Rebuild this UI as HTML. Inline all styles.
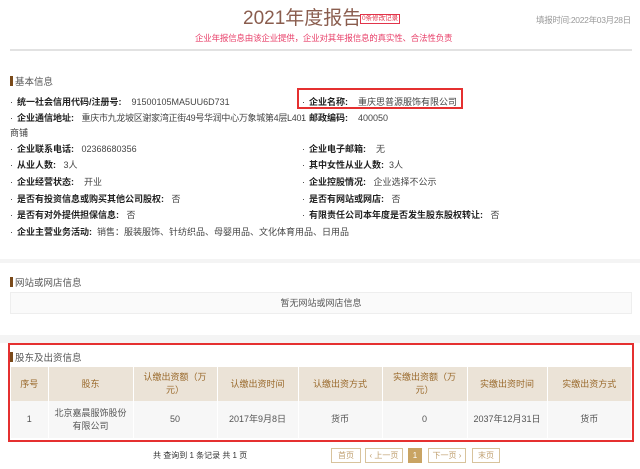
<!DOCTYPE html>
<html><head><meta charset="utf-8"><style>
*{margin:0;padding:0;box-sizing:border-box}
body{width:640px;height:469px;background:#fff;font-family:"Liberation Sans","Noto Sans CJK SC",sans-serif;position:relative;overflow:hidden;color:#333;font-size:9px}
.a{position:absolute;white-space:nowrap}
.t{left:243px;top:8px;font-size:19px;color:#8a5d4e;line-height:22px}
.badge{left:360px;top:14px;font-size:6.5px;color:#e2344a;border:1px solid #e2344a;padding:0 1px;line-height:8px}
.sub{left:195px;top:32px;font-size:8.5px;color:#e8406a;letter-spacing:-0.2px}
.time{left:536px;top:14px;font-size:8.5px;color:#999;letter-spacing:-0.3px}
.line{left:10px;top:49px;width:622px;height:2px;background:#e2e2e2}
.h{font-size:9.5px;color:#555}
.h:before{content:"";display:inline-block;width:3px;height:10px;background:#7a4a1a;margin-right:2px;vertical-align:-1px}
.b{font-weight:bold;color:#222}
.b:before{content:"·";font-weight:normal;margin-right:4px;color:#333}
.v{color:#444}
.gray{left:0;width:640px;background:#f4f4f4}
table{border-collapse:collapse;position:absolute;left:11px;top:367px;width:621px;font-size:9px;text-align:center}
th{background:#ebe3d7;color:#9a6a2c;font-weight:normal;height:34px;border-right:1px solid #fff;line-height:13px}
td{background:#f7f7f7;height:37px;border-right:1px solid #fff;color:#555;line-height:13px}
.pg{top:448px;height:15px;border:1px solid #d8c39c;color:#c0a070;font-size:8px;text-align:center;line-height:13px;background:#fff}
</style></head><body>
<div class="a t">2021年度报告</div>
<div class="a badge">0条修改记录</div>
<div class="a sub">企业年报信息由该企业提供，企业对其年报信息的真实性、合法性负责</div>
<div class="a time">填报时间:2022年03月28日</div>
<div class="a line"></div>
<div class="a h" style="left:10px;top:74px">基本信息</div>

<div class="a" style="left:10px;top:95px"><span class="b">统一社会信用代码/注册号:</span>&nbsp;&nbsp;&nbsp;&nbsp;<span class="v">91500105MA5UU6D731</span></div>
<div class="a" style="left:302px;top:95px"><span class="b">企业名称:</span>&nbsp;&nbsp;&nbsp;&nbsp;<span class="v">重庆思普源服饰有限公司</span></div>
<div class="a" style="left:297px;top:88px;width:166px;height:21px;border:2px solid #e53030"></div>
<div class="a" style="left:10px;top:111px"><span class="b">企业通信地址:</span>&nbsp;&nbsp;&nbsp;<span class="v" style="letter-spacing:-0.3px">重庆市九龙坡区谢家湾正街49号华润中心万象城第4层L401</span></div>
<div class="a" style="left:302px;top:111px"><span class="b">邮政编码:</span>&nbsp;&nbsp;&nbsp;&nbsp;<span class="v">400050</span></div>
<div class="a v" style="left:10px;top:126px">商铺</div>

<div class="a" style="left:10px;top:142px"><span class="b">企业联系电话:</span>&nbsp;&nbsp;&nbsp;<span class="v">02368680356</span></div>
<div class="a" style="left:302px;top:142px"><span class="b">企业电子邮箱:</span>&nbsp;&nbsp;&nbsp;&nbsp;<span class="v">无</span></div>
<div class="a" style="left:10px;top:158px"><span class="b">从业人数:</span>&nbsp;&nbsp;&nbsp;<span class="v">3人</span></div>
<div class="a" style="left:302px;top:158px"><span class="b">其中女性从业人数:</span>&nbsp;&nbsp;<span class="v">3人</span></div>
<div class="a" style="left:10px;top:175px"><span class="b">企业经营状态:</span>&nbsp;&nbsp;&nbsp;&nbsp;<span class="v">开业</span></div>
<div class="a" style="left:302px;top:175px"><span class="b">企业控股情况:</span>&nbsp;&nbsp;&nbsp;<span class="v">企业选择不公示</span></div>
<div class="a" style="left:10px;top:192px"><span class="b">是否有投资信息或购买其他公司股权:</span>&nbsp;&nbsp;&nbsp;<span class="v">否</span></div>
<div class="a" style="left:302px;top:192px"><span class="b">是否有网站或网店:</span>&nbsp;&nbsp;&nbsp;<span class="v">否</span></div>
<div class="a" style="left:10px;top:208px"><span class="b">是否有对外提供担保信息:</span>&nbsp;&nbsp;&nbsp;<span class="v">否</span></div>
<div class="a" style="left:302px;top:208px"><span class="b">有限责任公司本年度是否发生股东股权转让:</span>&nbsp;&nbsp;&nbsp;<span class="v">否</span></div>
<div class="a" style="left:10px;top:225px"><span class="b">企业主营业务活动:</span>&nbsp;&nbsp;<span class="v">销售：服装服饰、针纺织品、母婴用品、文化体育用品、日用品</span></div>

<div class="a gray" style="top:259px;height:4px"></div>
<div class="a h" style="left:10px;top:275px">网站或网店信息</div>
<div class="a" style="left:10px;top:292px;width:622px;height:22px;border:1px solid #eee;background:#fafafa;text-align:center;line-height:20px;color:#555">暂无网站或网店信息</div>
<div class="a gray" style="top:335px;height:8px"></div>

<div class="a h" style="left:10px;top:350px">股东及出资信息</div>
<table>
<tr><th style="width:37px">序号</th><th style="width:85px">股东</th><th style="width:84px">认缴出资额（万<br>元）</th><th style="width:81px">认缴出资时间</th><th style="width:84px">认缴出资方式</th><th style="width:85px">实缴出资额（万<br>元）</th><th style="width:80px">实缴出资时间</th><th>实缴出资方式</th></tr>
<tr><td>1</td><td>北京嘉晨服饰股份<br>有限公司</td><td>50</td><td>2017年9月8日</td><td>货币</td><td>0</td><td>2037年12月31日</td><td>货币</td></tr>
</table>
<div class="a" style="left:8px;top:343px;width:626px;height:99px;border:2px solid #e53030"></div>

<div class="a" style="left:153px;top:450px;font-size:8px;color:#333">共 查询到 1 条记录 共 1 页</div>
<div class="a pg" style="left:331px;width:30px">首页</div>
<div class="a pg" style="left:365px;width:38px">‹ 上一页</div>
<div class="a pg" style="left:408px;width:14px;background:#c9a463;border-color:#c9a463;color:#fff">1</div>
<div class="a pg" style="left:428px;width:38px">下一页 ›</div>
<div class="a pg" style="left:472px;width:28px">末页</div>
</body></html>
